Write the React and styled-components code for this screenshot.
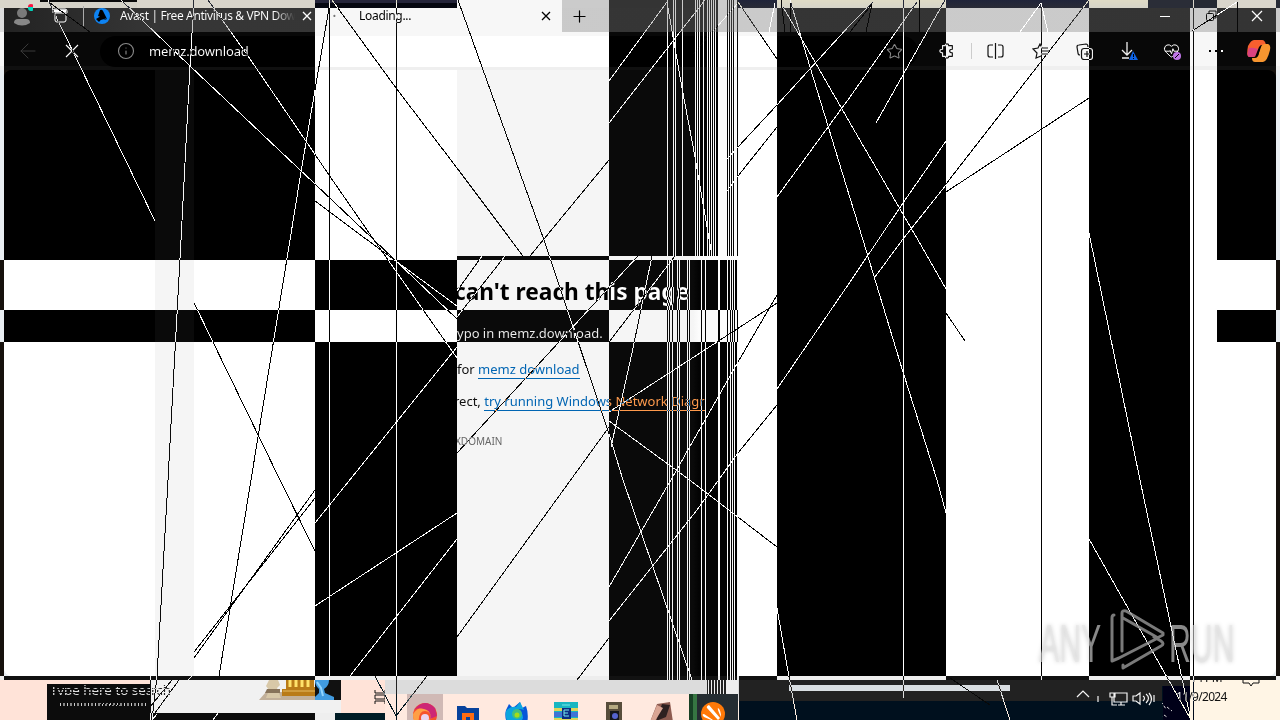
import React from "react";
import styled, { createGlobalStyle } from "styled-components";
import { ArrowLeft, Info, Star, HeartPulse, Plus } from "lucide-react";

const Global = createGlobalStyle`
  * { box-sizing: border-box; }
  html, body { margin: 0; width: 1280px; height: 720px; overflow: hidden; }
  body { font-family: "Noto Sans", "Open Sans", sans-serif; color: #000; }
  svg { display: block; flex: none; }
`;

const Screen = styled.main`
  position: relative;
  isolation: isolate;
  display: flex;
  flex-direction: column;
  width: 1280px;
  height: 720px;
  overflow: hidden;
  background: #fff;
`;
const Desktop = styled.div`
  display: flex;
  height: 8px;
  flex: none;
`;
const DesktopPart = styled.div`
  width: ${(p) => p.$w}px;
  background: ${(p) => p.$bg};
`;
const TabStrip = styled.header`
  display: flex;
  align-items: center;
  height: 24px;
  flex: none;
  padding-bottom: 8px;
  background: linear-gradient(90deg, #ddd, #c9c9c9 12%, #cbcbcb);
`;
const Slot = styled.div`
  display: flex;
  align-items: center;
  justify-content: center;
  flex: none;
  width: ${(p) => p.$w}px;
  color: ${(p) => p.$c || "#000"};
`;
const TabTitle = styled.span`
  width: ${(p) => p.$w}px;
  flex: none;
  overflow: hidden;
  white-space: nowrap;
  font-size: 12px;
  line-height: 16px;
  letter-spacing: ${(p) => p.$ls || 0}px;
  ${(p) => p.$fade && "mask-image: linear-gradient(90deg, #000 88%, transparent);"}
`;
const ActiveTab = styled.div`
  display: flex;
  align-items: center;
  height: 24px;
  margin-bottom: -8px;
  padding-bottom: 8px;
  width: 247px;
  flex: none;
  background: #f7f7f7;
`;
const Spacer = styled.div`
  flex: 1;
`;
const Dash = styled.i`
  width: 10px;
  height: 1px;
  background: #000;
`;
const Toolbar = styled.div`
  display: flex;
  align-items: center;
  height: 38px;
  flex: none;
  padding-left: 6px;
  background: linear-gradient(#f7f7f7 0 34px, #efefef 34px 38px);
`;
const Address = styled.div`
  display: flex;
  align-items: center;
  width: 818px;
  height: 31px;
  flex: none;
  margin-left: 6px;
  padding-left: 10px;
  border-radius: 16px;
  background: #fff;
`;
const Url = styled.span`
  width: 730px;
  font-size: 13px;
  line-height: 18px;
  letter-spacing: -0.15px;
`;
const Divider = styled.i`
  width: 1px;
  height: ${(p) => p.$h}px;
  background: ${(p) => p.$bg};
`;
const Viewport = styled.section`
  display: flex;
  height: 606px;
  flex: none;
  background: #e9eef2;
`;
const Page = styled.div`
  display: flex;
  width: 1272px;
  margin-left: 4px;
  overflow: hidden;
  border-radius: 8px;
  background: #fff;
`;
const Blank = styled.div`
  width: ${(p) => p.$w}px;
  flex: none;
  background: ${(p) => p.$bg};
`;
const ErrorPane = styled.article`
  width: 281px;
  height: 606px;
  flex: none;
  overflow: hidden;
  white-space: nowrap;
  padding-top: 206px;
  background: linear-gradient(90deg, #f5f5f5 84%, #fcfcfc 86%);
`;
const Heading = styled.h1`
  margin: 0 0 0 -3px;
  height: 48px;
  font-size: 22.7px;
  line-height: 32px;
  font-weight: 700;
`;
const Copy = styled.p`
  margin: 0 0 0 ${(p) => p.$x || 0}px;
  height: ${(p) => p.$h}px;
  font-size: ${(p) => p.$size || 13}px;
  line-height: 18px;
  color: ${(p) => p.$c || "#111"};
`;
const Link = styled.span`
  display: inline-block;
  height: 19px;
  color: #0065b3;
  border-bottom: 1px solid #0065b3;
`;
const Footer = styled.div`
  display: flex;
  height: 4px;
  flex: none;
  background: #111;
`;

const Overlay = styled.div`
  position: absolute;
  inset: 0 0 auto 0;
  height: 680px;
  display: flex;
  mix-blend-mode: difference;
  pointer-events: none;
`;
const Band = styled.div`
  width: ${(p) => p.$w}px;
  flex: none;
  display: flex;
  flex-direction: column;
`;
const Cell = styled.div`
  height: ${(p) => p.$h}px;
  flex: none;
  background: ${(p) => (p.$on ? "#fff" : "transparent")};
`;
const Scratches = styled.svg`
  position: absolute;
  inset: 0;
  mix-blend-mode: ${(p) => p.$mode || "normal"};
  pointer-events: none;
`;

const Taskbar = styled.footer`
  display: flex;
  height: 40px;
  flex: none;
  overflow: hidden;
  background: #ffe3d8;
`;
const SearchFragment = styled.div`
  width: 103px;
  height: 36px;
  margin: 4px 0 0 47px;
  flex: none;
  overflow: hidden;
  background: #0c0c0c;
  color: #ddd;
  padding-left: 3px;
`;
const SearchText = styled.div`
  height: ${(p) => p.$h}px;
  margin-top: ${(p) => p.$mt}px;
  overflow: hidden;
  white-space: nowrap;
  font-size: ${(p) => p.$size}px;
  line-height: 13px;
  padding-left: ${(p) => p.$x}px;
  mask-image: repeating-linear-gradient(#000 0 2px, transparent 2px 3px);
`;
const SearchTail = styled(SearchText)`
  width: 109px;
  color: #222;
`;
const DottedTrace = styled.i`
  display: block;
  width: 86px;
  height: 3px;
  margin: 8px 0 0 10px;
  background: repeating-linear-gradient(100deg, #ccc 0 1px, transparent 1px 3px, #888 3px 5px, transparent 5px 7px);
`;
const Stack = styled.div`
  display: flex;
  flex-direction: column;
  width: ${(p) => p.$w}px;
  flex: none;
`;
const Strip = styled.div`
  display: flex;
  align-items: ${(p) => (p.$top ? "flex-start" : "center")};
  height: ${(p) => p.$h}px;
  flex: none;
  background: ${(p) => p.$bg};
  padding-left: ${(p) => p.$x || 0}px;
`;
const AppRow = styled.div`
  display: flex;
  height: 26px;
  background: #ffe9df;
`;
const AppButton = styled.div`
  display: flex;
  justify-content: center;
  width: ${(p) => p.$w}px;
  flex: none;
  height: 40px;
  padding-top: ${(p) => p.$pt ?? 8}px;
  background: ${(p) => p.$bg || "transparent"};
`;
const Tray = styled.div`
  display: flex;
  width: 424px;
  flex: none;
  background: linear-gradient(#222 0 21px, #00101e 21px 40px);
`;
const TrayBar = styled.div`
  width: 221px;
  height: 6px;
  margin: 5px 0 0 51px;
  background: #d9dee2;
`;
const TrayIcons = styled.div`
  padding: 8px 0 0 66px;
`;
const Clock = styled.div`
  display: flex;
  width: 90px;
  flex: none;
  flex-direction: column;
  position: relative;
  background: #fff5e5;
  color: #111;
  font: 12px/16px "Noto Sans", sans-serif;
`;
const ClockTime = styled.div`
  height: 6px;
  overflow: hidden;
  display: flex;
  align-items: flex-end;
  gap: 20px;
  letter-spacing: -0.6px;
`;
const ClockDate = styled.div`
  margin: 3px 0 0 -14px;
  letter-spacing: -0.7px;
`;
const Light = styled.span`
  color: #eee;
`;
const Watermark = styled.div`
  position: absolute;
  left: 1039px;
  top: 608px;
  display: flex;
  width: 196px;
  height: 64px;
  align-items: center;
  filter: drop-shadow(0 0 2px rgba(0, 0, 0, 0.3));
`;
const Word = styled.span`
  display: block;
  width: ${(p) => p.$w}px;
  height: 54px;
  margin-top: 8px;
  color: rgba(228, 228, 228, 0.6);
  font: 400 53px/54px "Liberation Sans", sans-serif;
  transform: scaleX(0.57);
  transform-origin: 0 50%;
  white-space: nowrap;
`;

// Each band: width, then whether every row is inverted.
const ROWS = [256, 4, 50, 32, 338];
const BANDS = [
  [4, [0, 0, 1, 0, 1]],
  [311, [1, 1, 0, 1, 0]],
  [142, [0, 0, 1, 0, 1]],
  [152, [0, 1, 0, 1, 0]],
  [129, [1, 0, 1, 0, 1]],
  [39, [0, 0, 0, 0, 0]],
  [169, [1, 1, 1, 1, 1]],
  [143, [0, 0, 0, 0, 0]],
  [101, [1, 1, 1, 1, 1]],
  [27, [0, 0, 0, 0, 0]],
  [59, [1, 1, 0, 1, 0]],
  [4, [0, 0, 1, 0, 1]],
];

const LINES = [
  "48,0 155,221", "121,0 190,66 315,184 373,239 457,319", "208,0 248,56 329,175 374,240 457,358",
  "315,201 366,239 457,306", "194,0 190,66 181,240 168,480 157,676 152,720",
  "329,8 315,90 301,172 290,240 251,480 219,676", "332,0 396,88 457,168 523,256",
  "458,0 544,240 610,437 623,480 692,680", "609,160 530,256", "482,256 457,291", "505,256 457,317",
  "638,256 457,453", "652,256 632,353 611,447", "675,256 609,342", "609,421 687,478 777,547",
  "609,427 457,637", "777,303 717,342 609,412", "457,513 315,606", "777,295 738,362 672,478 609,587",
  "777,405 738,453 697,510 609,621", "609,638 577,680", "457,347 315,523", "457,539 350,676",
  "194,303 280,480 315,551", "315,490 194,658", "315,498 194,652", "667,2 609,81", "705,0 609,123",
  "667,2 682,88 695,157 712,256", "738,2 777,59", "783,7 815,62 850,123 918,240 946,289",
  "946,313 965,341", "790,0 810,67 850,198 863,240 903,372 937,480 946,513",
  "873,2 850,25 777,105 738,147 719,168", "917,2 850,97 777,197", "777,127 738,176 719,202",
  "945,0 876,123", "946,141 903,203 850,282 777,389", "946,185 903,239 875,277", "1089,0 946,184",
  "1089,98 946,192", "1089,233 1140,480 1183,683 1190,716", "1089,539 1190,718", "777,608 786,660 797,720",
  "997,680 1010,720", "375,676 396,716 427,676", "172,680 150,707", "179,680 155,713",
  "157,714 152,720", "218,713 213,720", "192,676 188,680",
];
const VERTICALS = [[329, 0, 676], [396, 0, 720], [903, 0, 698], [1041, 8, 680], [1193, 0, 720], [150, 676, 720], [738, 676, 720]];
const TOP_STRIPES = [667, 673, 675, 682, 695, 697, 699, 703, 707, 709, 711, 713, 715, 718, 719, 720, 721, 722, 723, 724, 725, 726, 728, 730, 732, 734, 735, 736];
const LOW_STRIPES = [667, 669, 672, 677, 679, 687, 689, 701, 705, 718, 719, 727, 730, 732, 734, 737];

function Cross({ size, weight = 1.1 }) {
  return (
    <svg width={size} height={size} viewBox={`0 0 ${size} ${size}`} fill="none" stroke="#000" strokeWidth={weight}>
      <path d={`M1 1L${size - 1} ${size - 1}M${size - 1} 1L1 ${size - 1}`} />
    </svg>
  );
}
function Person() {
  return (
    <svg width="22" height="24" viewBox="0 0 22 24">
      <circle cx="11" cy="9" r="5" fill="#858585" />
      <path d="M3 19q0-4 4-4h8q4 0 4 4-8 5-16 0" fill="#777" />
      <circle cx="20" cy="4" r="3" fill="#ff2840" /><path d="M17 3a3 3 0 0 1 6 0z" fill="#00efc0" />
    </svg>
  );
}
function TabActions() {
  return (
    <svg width="16" height="16" viewBox="0 0 16 16" fill="none" stroke="#000">
      <path d="M1 5V3q0-2 2-2h10q2 0 2 2v2M3 5v7q0 2 2 2h7q2 0 2-2V5z" /><path d="M2 3h12" strokeWidth="3" />
    </svg>
  );
}
function AvastMark() {
  return (
    <svg width="16" height="16" viewBox="0 0 16 16">
      <circle cx="8" cy="8" r="8" fill="#f27c0c" />
      <path d="M4 8L6 2q2-1 3 1l4 8zM2 11l5-3 6 4q-6-2-8 2z" fill="#fff" />
    </svg>
  );
}
function Extension() {
  return (
    <svg width="16" height="16" viewBox="0 0 18 18" fill="none" stroke="#111" strokeWidth="1.3" strokeLinejoin="round">
      <path d="M4 3h3q0-2 2-2t2 2h4v4q-3 0-3 2t3 2v4h-4q0 2-2 2t-2-2H4v-4Q1 11 1 9t3-2z" />
    </svg>
  );
}
function Split() {
  return (
    <svg width="17" height="16" viewBox="0 0 17 16" fill="none" stroke="#111" strokeWidth="1.2">
      <path d="M6 2H3Q1 2 1 4v8q0 2 2 2h3M11 2h3q2 0 2 2v8q0 2-2 2h-3M8.5 0v16" />
    </svg>
  );
}
function Favorites() {
  return (
    <svg width="18" height="16" viewBox="0 0 18 16" fill="none" stroke="#111" strokeWidth="1.2">
      <path d="M9 13l-5 2 1-5-4-4 5-1 2-4 2 4h6M10 8h7M9 11h7" />
    </svg>
  );
}
function Collections() {
  return (
    <svg width="17" height="17" viewBox="0 0 17 17" fill="none" stroke="#111" strokeWidth="1.2">
      <path d="M4 12Q2 12 2 10L1 4q0-2 2-2l7-1q2 0 2 3" /><rect x="5.5" y="5.5" width="11" height="11" rx="2.5" /><path d="M11 8v6M8 11h6" />
    </svg>
  );
}
function DownloadAlert() {
  return (
    <svg width="19" height="20" viewBox="0 0 19 20" fill="none">
      <path d="M8 1v13M3 9l5 5 5-5M3 17h7" stroke="#111" strokeWidth="1.3" />
      <path d="M14 10l5 9H10z" fill="#f19b18" /><path d="M14.5 13v3M14.5 17v1" stroke="#fff" />
    </svg>
  );
}
function Copilot() {
  return (
    <svg width="25" height="24" viewBox="0 0 25 24">
      <path d="M2 7Q5 1 8 1h8q3 0 4 5h-4q-2 0-3 4l-2 6q-1 2-4 2H3q-3-1-1-11" fill="#08a0d0" />
      <path d="M3 9q4-1 9 1l-2 6q-1 2-4 2H3q-3-1 0-9" fill="#25bd80" />
      <path d="M19 5h3q3 1 2 6-3 12-7 12H9q-3 0-3-4h3q3 0 4-5l2-6q1-3 4-3" fill="#086ad0" />
      <path d="M13 8l2-2-3 11-3 1z" fill="#fff" />
    </svg>
  );
}
function Chess() {
  return (
    <svg width="82" height="20" viewBox="0 0 82 20">
      <path d="M0 20l7-8h72v8z" fill="#c2b09a" /><path d="M10 0h9l2 5-3 3 4 10H7l3-8-3-4z" fill="#d8c8a8" /><path d="M8 9h13v4H6z" fill="#87735a" />
      <path d="M27 0h28v7h3v9H23V9h4z" fill="#b97b18" /><path d="M31 0v7m6-7v7m6-7v7m6-7v7" stroke="#ffe26b" strokeWidth="3" /><path d="M24 11h33" stroke="#e5bd65" />
      <path d="M56 0h26v20H56z" fill="#111" /><path d="M56 0h14q0 6-5 9l1 4 9 4v3H56v-3l4-4V9q-4-3-4-9" fill="#419be0" /><path d="M58 2l4 6 2 8" fill="none" stroke="#90d4ff" strokeWidth="2" />
    </svg>
  );
}
function EdgeLogo() {
  return (
    <svg width="26" height="26" viewBox="0 0 26 26"><circle cx="13" cy="13" r="12" fill="#f6532b" /><path d="M1 12Q8 2 17 8q8 6 0 10 4-8-4-9-8 0-6 17Q1 22 1 12" fill="#ff9f45" /><path d="M2 8Q12-5 23 6l2 8-7 3q2-8-6-10Q6 5 2 8" fill="#cd2675" /><circle cx="13" cy="16" r="4" fill="#ead5ed" /></svg>
  );
}
function FolderLogo() {
  return <svg width="22" height="18" viewBox="0 0 22 18"><path d="M0 1h8l2 2h12v15H0z" fill="#07429c" /><path d="M5 18V8h12v10h-4v-6H9v6z" fill="#ff6c12" /></svg>;
}
function FirefoxLogo() {
  return <svg width="24" height="22" viewBox="0 0 24 22"><path d="M1 8l3-6 4 4L15 0l2 6 4-2q3 8 1 18H3Q-1 16 1 8" fill="#0757d8" /><path d="M1 9q4-5 10-4l4-5 4 8q-5-2-8 0 7 1 7 8l-3 6H3Q0 15 1 9" fill="#0ba5de" /><circle cx="12" cy="12" r="5" fill="#42be80" /><circle cx="12" cy="13" r="2.5" fill="#a5dd17" /></svg>;
}
function Archive() {
  return <svg width="24" height="20" viewBox="0 0 24 20"><path fill="#17b6c1" d="M0 0h24v20H0z" /><path fill="#ddd45a" d="M0 6h24v3H0zM0 16h24v3H0z" /><path fill="#3f74d6" d="M0 10h24v5H0z" /><path fill="#0c2b83" d="M8 6h9v11H8z" /><path d="M15 8h-5v6h5M10 11h4M8 3h8" fill="none" stroke="#79e9ec" /></svg>;
}

export default function App() {
  return (
    <>
      <Global />
      <Screen>
        <Desktop>
          <DesktopPart $w={4} $bg="#d9d6cb" />
          <DesktopPart $w={36} $bg="#262a34" />
          <DesktopPart $w={97} $bg="linear-gradient(#f5f5f5 0 2px, #2b2e38 2px)" />
          <DesktopPart $w={178} $bg="#262a34" />
          <DesktopPart $w={142} $bg="linear-gradient(#25253a 0 3px, #050710 3px)" />
          <DesktopPart $w={105} $bg="#f7f7f7" />
          <DesktopPart $w={176} $bg="#cbcbcb" />
          <DesktopPart $w={410} $bg="linear-gradient(#20243a, #292b36)" />
          <DesktopPart $w={42} $bg="#d5d2c8" />
          <DesktopPart $w={90} $bg="#262a34" />
        </Desktop>
        <TabStrip>
          <Slot $w={44}><Person /></Slot>
          <Slot $w={32}><TabActions /></Slot>
          <Slot $w={15}><Divider $h={20} $bg="#555" /></Slot>
          <Slot $w={22}><AvastMark /></Slot>
          <Slot $w={7} />
          <TabTitle $w={175} $ls={-0.38} $fade>Avast | Free Antivirus &amp; VPN Dow</TabTitle>
          <Slot $w={4} />
          <Slot $w={16}><Cross size={10} weight={1.3} /></Slot>
          <ActiveTab>
            <Slot $w={39} $c="#777">·</Slot>
            <Slot $w={5} />
            <TabTitle $w={177} $ls={-0.3}>Loading...</TabTitle>
            <Slot $w={20}><Cross size={10} weight={1.3} /></Slot>
          </ActiveTab>
          <Slot $w={35}><Plus size={19} strokeWidth={1.5} /></Slot>
          <Spacer />
          <Slot $w={46}><Dash /></Slot>
          <Slot $w={46}><svg width="12" height="12" viewBox="0 0 12 12" fill="none" stroke="#111"><rect x="1.5" y="3.5" width="7" height="7" rx="1" /><path d="M4 3V1h7v7H9" /></svg></Slot>
          <Slot $w={46}><Cross size={12} weight={1.2} /></Slot>
        </TabStrip>
        <Toolbar>
          <Slot $w={44} $c="#c6c6c6"><ArrowLeft size={24} strokeWidth={1} /></Slot>
          <Slot $w={44}><Cross size={14} /></Slot>
          <Address>
            <Slot $w={32} $c="#777"><Info size={18} strokeWidth={1.5} /></Slot>
            <Slot $w={7} />
            <Url>memz.download</Url>
            <Slot $w={30} $c="#777"><Star size={17} strokeWidth={1.5} /></Slot>
          </Address>
          <Slot $w={8} />
          <Slot $w={42}><Extension /></Slot>
          <Slot $w={6}><Divider $h={16} $bg="#ccc" /></Slot>
          <Slot $w={43}><Split /></Slot>
          <Slot $w={48}><Favorites /></Slot>
          <Slot $w={38}><Collections /></Slot>
          <Slot $w={50}><DownloadAlert /></Slot>
          <Slot $w={38}><svg width="19" height="19" viewBox="0 0 19 19"><HeartPulse size={17} strokeWidth={1.4} /><circle cx="14" cy="14" r="4" fill="#408a18" /><path d="M12 16l4-4" stroke="#fff" /></svg></Slot>
          <Slot $w={49}><svg width="16" height="4" viewBox="0 0 16 4"><path d="M1 2h2m4 0h2m4 0h2" stroke="#000" strokeWidth="2" /></svg></Slot>
          <Slot $w={36}><Copilot /></Slot>
        </Toolbar>
        <Viewport>
          <Page>
            <Blank $w={151} $bg="#fff" />
            <Blank $w={39} $bg="#f5f5f5" />
            <Blank $w={263} $bg="#fff" />
            <ErrorPane>
              <Heading>can't reach this page</Heading>
              <Copy $h={36}>ypo in memz.download.</Copy>
              <Copy $h={32}>for <Link>memz download</Link></Copy>
              <Copy $h={40} $x={-3}>rect, <Link>try running Windows Network Diagr</Link></Copy>
              <Copy $h={18} $size={10} $c="#666" $x={-2}>XDOMAIN</Copy>
            </ErrorPane>
          </Page>
        </Viewport>
        <Footer>
          <Blank $w={457} $bg="#111" /><Blank $w={281} $bg="#ededed" />
        </Footer>
        <Taskbar>
          <SearchFragment>
            <SearchText $h={11} $mt={0} $size={13.4} $x={0}>Type here to sea</SearchText>
            <DottedTrace />
          </SearchFragment>
          <Stack $w={191}>
            <Strip $top $h={33} $bg="#f1f1f1">
              <SearchTail $h={13} $mt={4} $size={13.4} $x={1}>rch</SearchTail>
              <Chess />
            </Strip>
            <Strip $h={7} $bg="linear-gradient(90deg,#0c0c0c 0 165px,#eee 165px 185px,#001c25 185px)" />
          </Stack>
          <Stack $w={44}>
            <Strip $h={33} $bg="#ffe3d8" $x={33}><svg width="16" height="16" viewBox="0 0 16 16" fill="none" stroke="#111"><path d="M1 1v3h10V1M1 15v-3h10v3M1 6h10v4H1zM14 0v5m0 5v6" /><path d="M13 7h3" strokeWidth="3" /></svg></Strip>
            <Strip $h={7} $bg="#001c25" />
          </Stack>
          <Stack $w={304}>
            <Strip $h={14} $bg="#dcdcdc" />
            <AppRow>
              <AppButton $w={22} />
              <AppButton $w={36} $bg="#d0b9b5"><EdgeLogo /></AppButton>
              <AppButton $w={49} $pt={11}><FolderLogo /></AppButton>
              <AppButton $w={49}><FirefoxLogo /></AppButton>
              <AppButton $w={49}><Archive /></AppButton>
              <AppButton $w={48}><svg width="16" height="22" viewBox="0 0 16 22"><path fill="#574d3b" d="M0 0h16v22H0z" /><path fill="#b6aa82" d="M3 3h9v4H3z" /><path fill="#15171b" d="M4 9h9v13H4z" /><circle cx="9" cy="14" r="3" fill="#5564ce" /><path d="M6 20h6" stroke="#16cd98" strokeWidth="2" /></svg></AppButton>
              <AppButton $w={48}><svg width="24" height="20" viewBox="0 0 24 20"><path d="M7 2l13-2 3 20H0z" fill="#8d5b50" /><path d="M12 2l8 1-4 12-10 4z" fill="#2d2020" /><path d="M7 3l6 3-8 13-5 1z" fill="#d9a594" /></svg></AppButton>
            </AppRow>
          </Stack>
          <Stack $w={49}>
            <Strip $h={14} $bg="linear-gradient(90deg,#dcdcdc 0 18px,transparent 18px 38px,#eee 38px), repeating-linear-gradient(90deg,#222 0 1px,#eee 1px 2px,#222 2px 3px)" />
            <AppButton $w={49} $pt={7} $bg="linear-gradient(90deg,#174025 0 4px,#367642 4px 8px,#252d32 8px)"><svg width="26" height="26" viewBox="0 0 26 26"><circle cx="12" cy="13" r="12" fill="#ff7908" /><path d="M8 4l11 13-2 2L6 7q-1-2 2-3m-5 9l12 8-12-5q-3-3 0-3m14-6q3 2 3 9-4-8-3-9" fill="#fff" /></svg></AppButton>
          </Stack>
          <Tray>
            <TrayBar />
            <TrayIcons><svg width="84" height="28" viewBox="0 0 84 28" fill="none" stroke="#f4f4f4" strokeWidth="1.2">
              <path d="M1 9l6-6 6 6M22 8v6M38 5h13v9H38zM42 17h7m-4-3v3M34 5h5v4h-5zM36 9v8h5M57 8h3l4-3v11l-4-3h-3zM67 8q3 2 0 5m3-7q5 4 0 9m3-10q5 6 0 12M78 7v7" />
            </svg></TrayIcons>
          </Tray>
          <Stack $w={28}><Strip $h={6} $bg="#222" /><Strip $h={34} $bg="linear-gradient(90deg,#00101e 0 1px,#000018 1px)"><svg width="26" height="32" viewBox="0 0 26 32" fill="none" stroke="#ddd" strokeDasharray="3 2"><path d="M-3 22l3-6 4 6m1-2l5 4M-2 27l2 3m2-2l3 2" /></svg></Strip></Stack>
          <Clock>
            <ClockTime><span>14 PM</span><svg width="18" height="6" viewBox="0 0 18 6" fill="none" stroke="#111"><path d="M1 0v3h6l2 3 2-3h6V0" /></svg></ClockTime>
            <ClockDate><Light>11</Light>/9/2024</ClockDate>
          </Clock>
        </Taskbar>

        <Overlay>
          {BANDS.map(([w, cells], i) => (
            <Band key={i} $w={w}>{cells.map((on, j) => <Cell key={j} $h={ROWS[j]} $on={on} />)}</Band>
          ))}
        </Overlay>
        <Scratches width="1280" height="720" viewBox="0 0 1280 720" shapeRendering="crispEdges">
          <path d="M50 3L90 32M738 3L693 54M850 32L872 4M866 32L872 4M919 0V32M1237 2V32M781 0L785 32M790 0V32M950 678L990 705M1192 31L1217 15" stroke="#080808" />
          <path d="M1041 3L1020 32M1041 3L1048 32M775 3L769 32M1217 15L1237 2" stroke="#fff" />
        </Scratches>
        <Scratches $mode="difference" width="1280" height="720" viewBox="0 0 1280 720" shapeRendering="crispEdges">
          {LINES.map((points) => <polyline key={points} points={points} fill="none" stroke="#fff" />)}
          {VERTICALS.map(([x, y, end]) => <rect key={`${x}-${y}`} x={x} y={y} width="1" height={end - y} fill="#fff" />)}
          {TOP_STRIPES.map((x) => <rect key={x} x={x} y="0" width="1" height="256" fill="#fff" />)}
          {LOW_STRIPES.map((x) => <rect key={x} x={x} y="260" width="1" height="420" fill="#fff" />)}
        </Scratches>
        <Watermark>
          <Word $w={70}>ANY</Word>
          <svg width="60" height="62" viewBox="0 0 60 62" fill="none" stroke="#999" strokeOpacity=".8" strokeWidth="3" strokeLinejoin="round" strokeLinecap="round"><path d="M5 6q-2 0-2 3v43l7-3 39-20-5-3-30-17M13 42V4q0-3 4-2l37 22v2l-4 2M14 56v3l38-22q4-2 0-5l-7-4" /></svg>
          <Word $w={62}>RUN</Word>
        </Watermark>
      </Screen>
    </>
  );
}
